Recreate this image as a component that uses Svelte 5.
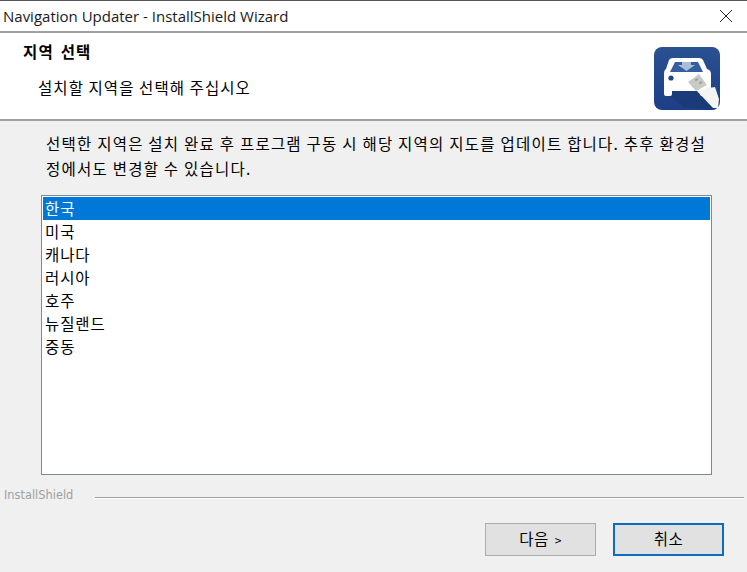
<script>
  const regions = ['한국', '미국', '캐나다', '러시아', '호주', '뉴질랜드', '중동'];
  let selected = $state('한국');
</script>

<div class="window">
  <div class="titlebar">
    <span class="title">Navigation Updater - InstallShield Wizard</span>
    <svg class="close" width="14" height="14" viewBox="0 0 14 14" aria-hidden="true">
      <path d="M1 1 L13 13 M13 1 L1 13" stroke="#222" stroke-width="1" fill="none" />
    </svg>
  </div>

  <header class="header">
    <div class="heading">
      <h1>지역 선택</h1>
      <p>설치할 지역을 선택해 주십시오</p>
    </div>
    <svg class="logo" width="66" height="63" viewBox="0 0 66 63" aria-hidden="true">
      <defs>
        <linearGradient id="bg" x1="0" y1="0" x2="0" y2="1">
          <stop offset="0" stop-color="#2a5192" />
          <stop offset="1" stop-color="#1c3f86" />
        </linearGradient>
      </defs>
      <rect width="66" height="63" rx="8" fill="url(#bg)" />
      <path d="M12 46 L30 60 L60 63 L66 50 L44 30 Z" fill="#173570" opacity=".55" />
      <path d="M15 13 Q16 11 19 11 L45 11 Q48 11 49 13 L53 22 Q57 23 57 27 L57 41 L54 41 L54 47 Q54 49 52 49 L48 49 Q46 49 46 47 L46 44 L18 44 L18 47 Q18 49 16 49 L12 49 Q10 49 10 47 L10 41 L10 27 Q10 23 12 22 Z" fill="#fff" />
      <path d="M21 15 L44 15 L49 25 L16 25 Z" fill="#345f9e" />
      <path d="M28 15 L37 15 L37 18 L41 18 L32.5 24 L24 18 L28 18 Z" fill="#a9bdd6" />
      <circle cx="17" cy="31" r="2.6" fill="#1f4488" />
      <path d="M42 43 L61 40 L65 52 L64 61 L59 61 Z" fill="#f4f4f2" />
      <path d="M34 35 L45 27 L53 38 L42 44 Z" fill="#c9c9c5" />
      <rect x="41" y="32" width="3" height="2" fill="#9a9a96" transform="rotate(-30 42 33)" />
      <rect x="45" y="35" width="3" height="2" fill="#9a9a96" transform="rotate(-30 46 36)" />
    </svg>
  </header>

  <main class="content">
    <p class="desc">선택한 지역은 설치 완료 후 프로그램 구동 시 해당 지역의 지도를 업데이트 합니다. 추후 환경설정에서도 변경할 수 있습니다.</p>

    <ul class="list">
      {#each regions as r}
        <li class:sel={r === selected}>
          <button type="button" onclick={() => (selected = r)}>{r}</button>
        </li>
      {/each}
    </ul>
  </main>

  <div class="brand">
    <span>InstallShield</span>
    <div class="rule"></div>
  </div>

  <footer class="footer">
    <button type="button" class="btn">다음 <small>&gt;</small></button>
    <button type="button" class="btn primary">취소</button>
  </footer>
</div>

<style>
  :global(body) {
    margin: 0;
    background: #f0f0f0;
  }
  .window {
    width: 747px;
    height: 572px;
    display: flex;
    flex-direction: column;
    overflow: hidden;
    background: #f0f0f0;
    color: #000;
    font-family: "Noto Sans CJK KR", "Noto Sans", sans-serif;
    box-sizing: border-box;
  }
  .titlebar {
    height: 31px;
    flex: none;
    box-sizing: border-box;
    border-top: 1px solid #555;
    background: #fff;
    display: flex;
    align-items: center;
    justify-content: space-between;
    padding: 0 14px 0 3px;
  }
  .title {
    font: 15px "Open Sans", "Noto Sans", sans-serif;
    color: #1a1a1a;
  }
  .close {
    margin-bottom: 1px;
  }
  .header {
    height: 90px;
    flex: none;
    box-sizing: border-box;
    background: #fff;
    border-top: 2px solid #a0a0a0;
    border-bottom: 2px solid #a0a0a0;
    display: flex;
    justify-content: space-between;
    padding: 8px 27px 0 23px;
  }
  h1 {
    margin: 0;
    font-size: 15.5px;
    line-height: 20px;
    font-weight: 700;
    letter-spacing: 1.2px;
    word-spacing: 2px;
  }
  .heading p {
    margin: 16px 0 0 15px;
    font-size: 15.5px;
    line-height: 20px;
    letter-spacing: 1.07px;
  }
  .logo {
    margin-top: 6px;
  }
  .content {
    flex: none;
    padding: 10px 35px 0 41px;
  }
  .desc {
    margin: 0 0 0 5px;
    font-size: 15.5px;
    line-height: 25px;
    letter-spacing: 1.23px;
    height: 55px;
    word-break: break-all;
  }
  .list {
    list-style: none;
    margin: 9px 0 0;
    padding: 1px;
    box-sizing: border-box;
    width: 671px;
    height: 280px;
    background: #fff;
    border: 1px solid #828790;
  }
  .list li {
    height: 23px;
  }
  .list button {
    all: unset;
    display: block;
    width: 100%;
    height: 23px;
    line-height: 21px;
    padding-left: 2px;
    box-sizing: border-box;
    font-size: 15.5px;
    letter-spacing: 0.9px;
    font-family: inherit;
  }
  .list li.sel button {
    background: #0078d7;
    color: #fff;
  }
  .brand {
    flex: none;
    display: flex;
    align-items: center;
    gap: 22px;
    height: 20px;
    margin-top: 10px;
    padding: 0 3px 0 4px;
  }
  .brand span {
    font: 11.4px "DejaVu Sans", sans-serif;
    color: #a0a0a0;
  }
  .rule {
    flex: 1;
    height: 1px;
    margin-top: 5px;
    background: #a0a0a0;
    border-bottom: 1px solid #fff;
  }
  .footer {
    flex: none;
    display: flex;
    justify-content: flex-end;
    gap: 17px;
    margin-top: 18px;
    padding-right: 23px;
  }
  .btn {
    width: 111px;
    height: 33px;
    box-sizing: border-box;
    background: #e1e1e1;
    border: 1px solid #adadad;
    padding: 0 0 3px;
    font-family: inherit;
    font-size: 15.5px;
    letter-spacing: 0.5px;
    color: #000;
  }
  .btn small {
    font-size: 12px;
    margin-left: 2px;
  }
  .primary {
    border: 2px solid #0f6cbd;
  }
</style>
